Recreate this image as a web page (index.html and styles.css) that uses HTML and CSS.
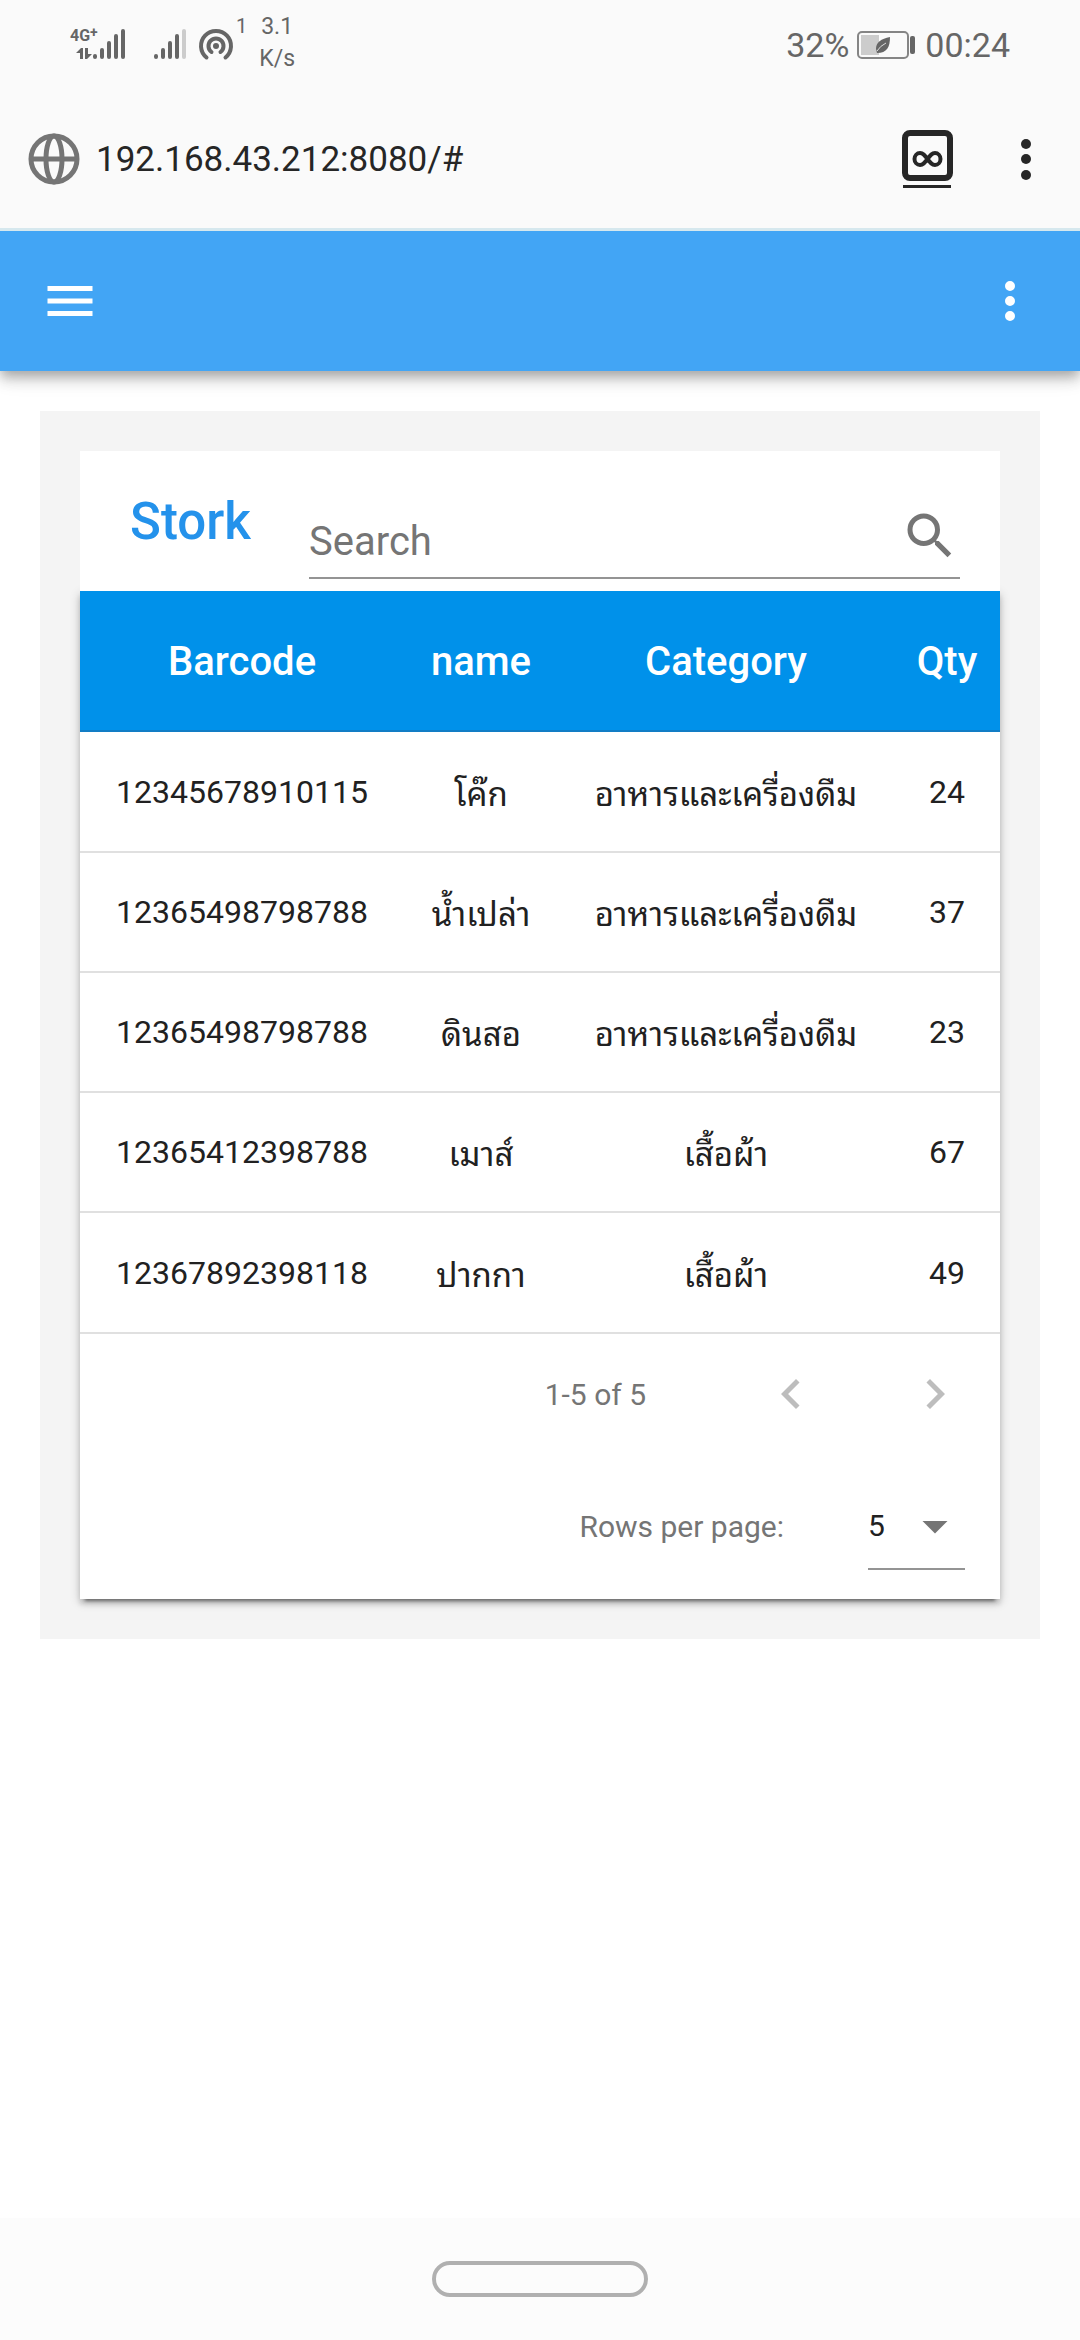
FILE: index.html
```html
<!DOCTYPE html>
<html lang="th">
<head>
<meta charset="utf-8">
<meta name="viewport" content="width=device-width, initial-scale=1">
<title>Stork</title>
<link rel="stylesheet" href="styles.css">
</head>
<body>
<div class="status">
  <div class="status-left">
    <div class="network">
      <span class="network-type">4G<sup>+</sup></span>
      <svg class="arrows" width="16" height="12" viewBox="0 0 16 12"><path d="M0 5L5 0h2v11H4V5zM9 0h3v6h4l-5 5H9z"/></svg>
    </div>
    <svg class="bars" width="34" height="32" viewBox="0 0 34 32"><path d="M3 28v1M10 22v7M17 15v14M24 8v21M31 3v26"/></svg>
    <svg class="bars bars-second" width="34" height="32" viewBox="0 0 34 32"><path d="M3 28v1M10 22v7M17 15v14M24 8v21"/><path class="faint" d="M31 3v26"/></svg>
    <svg class="hotspot" width="36" height="34" viewBox="0 0 36 34"><circle cx="18" cy="18" r="3"/><path d="M13.500 24A7.500 7.500 0 1 1 22.500 24M8.500 29.500A15 15 0 1 1 27.500 29.500"/></svg>
    <span class="clients">1</span>
    <span class="speed">3.1<br>K/s</span>
  </div>
  <div class="status-right">
    <span>32%</span>
    <svg width="60" height="28" viewBox="0 0 60 28"><rect x="1" y="1" width="50" height="26" rx="4" fill="none" stroke="#858585" stroke-width="2"/><path fill="#ccc" d="M4 4h18v20H4z"/><rect x="53" y="5" width="5" height="18" rx="2" fill="#666"/><path fill="#666" d="M33 6c-9 2-14 5-14 12l1 4c10 0 13-6 13-16z"/><path d="M20 20q3-5 9-8" stroke="#ddd" fill="none"/></svg>
    <span>00:24</span>
  </div>
</div>
<div class="browser">
  <svg width="52" height="52" viewBox="0 0 52 52" fill="none" stroke="#757575" stroke-width="5"><circle cx="26" cy="26" r="23"/><path d="M3 26h46"/><ellipse cx="26" cy="26" rx="8" ry="23"/></svg>
  <a class="url" href="#">192.168.43.212:8080/#</a>
  <button class="plain tabs" aria-label="Tabs"><svg width="52" height="60" viewBox="0 0 52 60" fill="none" stroke="#262626"><rect x="4" y="4" width="45" height="45" rx="5" stroke-width="6"/><path d="M2 57.500h48" stroke-width="3"/><path stroke-width="4" d="M26.500 30c-3-4-4.500-6-7.500-6a5.500 6 0 0 0 0 12c3 0 4.500-2 7.500-6s4.500-6 7.500-6a5.500 6 0 0 1 0 12c-3 0-4.500-2-7.500-6z"/></svg></button>
  <button class="plain" aria-label="Browser menu"><svg width="60" height="60" viewBox="0 0 60 60" fill="#262626"><circle cx="30" cy="15" r="5"/><circle cx="30" cy="30" r="5"/><circle cx="30" cy="46" r="5"/></svg></button>
</div>
<header class="appbar">
  <button class="plain" aria-label="Open menu"><svg width="60" height="60" viewBox="0 0 24 24" fill="#fff"><path d="M3 18h18v-2H3v2zm0-5h18v-2H3v2zm0-7v2h18V6H3z"/></svg></button>
  <button class="plain" aria-label="More"><svg width="60" height="60" viewBox="0 0 24 24" fill="#fff"><path d="M12 8a2 2 0 1 0 0-4 2 2 0 0 0 0 4zm0 2a2 2 0 1 0 0 4 2 2 0 0 0 0-4zm0 6a2 2 0 1 0 0 4 2 2 0 0 0 0-4z"/></svg></button>
</header>
<main class="panel">
  <div class="search-row">
    <h1 class="title">Stork</h1>
    <div class="field">
      <input class="search" type="search" placeholder="Search" aria-label="Search">
      <svg class="search-icon" width="60" height="60" viewBox="0 0 24 24" fill="#757575"><path d="M15.500 14h-.79l-.28-.27A6.471 6.471 0 0 0 16 9.500 6.500 6.500 0 1 0 9.500 16c1.610 0 3.090-.59 4.230-1.570l.27.28v.79l5 4.990L20.490 19l-4.990-5zm-6 0C7.010 14 5 11.990 5 9.500S7.010 5 9.500 5 14 7.010 14 9.500 11.990 14 9.500 14z"/></svg>
    </div>
  </div>
  <section class="card">
    <table class="stock">
      <colgroup><col class="col-barcode"><col class="col-name"><col class="col-category"><col class="col-qty"></colgroup>
      <thead><tr><th>Barcode</th><th>name</th><th>Category</th><th>Qty</th></tr></thead>
      <tbody>
        <tr><td>12345678910115</td><td class="thai">โค๊ก</td><td class="thai">อาหารและเครื่องดืม</td><td>24</td></tr>
        <tr><td>12365498798788</td><td class="thai">น้ำเปล่า</td><td class="thai">อาหารและเครื่องดืม</td><td>37</td></tr>
        <tr><td>12365498798788</td><td class="thai">ดินสอ</td><td class="thai">อาหารและเครื่องดืม</td><td>23</td></tr>
        <tr><td>12365412398788</td><td class="thai">เมาส์</td><td class="thai">เสื้อผ้า</td><td>67</td></tr>
        <tr><td>12367892398118</td><td class="thai">ปากกา</td><td class="thai">เสื้อผ้า</td><td>49</td></tr>
      </tbody>
    </table>
    <div class="pager">
      <span class="range">1-5 of 5</span>
      <button class="plain page" aria-label="Previous page" disabled><svg width="60" height="60" viewBox="0 0 24 24"><path d="M15.410 7.410L14 6l-6 6 6 6 1.410-1.410L10.830 12z"/></svg></button>
      <button class="plain page" aria-label="Next page" disabled><svg width="60" height="60" viewBox="0 0 24 24"><path d="M10 6L8.590 7.410 13.170 12l-4.580 4.590L10 18l6-6z"/></svg></button>
    </div>
    <div class="per-page">
      <label for="rows">Rows per page:</label>
      <div class="select-box">
        <select class="rows" id="rows"><option>5</option><option>10</option><option>20</option></select>
        <svg class="caret" width="60" height="60" viewBox="0 0 24 24" fill="#757575"><path d="M7 10l5 5 5-5z"/></svg>
      </div>
    </div>
  </section>
</main>
<footer class="navbar"><button class="home" aria-label="Home"></button></footer>
</body>
</html>
```
FILE: styles.css
```css
* { box-sizing: border-box; }

body {
  margin: 0;
  min-height: 100vh;
  display: flex;
  flex-direction: column;
  background: #fff;
  color: #212121;
  font-family: Roboto, "Noto Sans", sans-serif;
}

svg { display: block; flex: none; }

.plain {
  border: 0;
  padding: 0;
  background: none;
}

/* Phone status bar */
.status {
  display: flex;
  justify-content: space-between;
  height: 90px;
  padding: 0 70px;
  background: #fafafa;
  color: #666;
}
.status-left { display: flex; align-items: flex-start; }
.network {
  width: 24px;
  padding-top: 26px;
  font-size: 16px;
  font-weight: 700;
  line-height: 20px;
}
.network-type { display: block; white-space: nowrap; }
.network sup { font-size: 14px; line-height: 0; vertical-align: 4px; }
.arrows { margin: 2px 0 0 6px; fill: #666; }
.bars {
  margin-top: 28px;
  fill: none;
  stroke: #666;
  stroke-width: 4;
  stroke-linecap: round;
}
.network + .bars { margin-left: -2px; }
.bars-second { margin-left: 27px; }
.faint { stroke: #ccc; }
.hotspot { margin: 28px 0 0 11px; fill: #666; }
.hotspot path { fill: none; stroke: #666; stroke-width: 4; stroke-linecap: round; }
.clients { margin: 14px 0 0 2px; font-size: 20px; line-height: 24px; }
.speed { margin: 11px 0 0 12px; font-size: 23px; line-height: 32px; text-align: center; }
.status-right {
  display: flex;
  align-items: center;
  gap: 8px;
  font-size: 34px;
}

/* Browser address bar */
.browser {
  display: flex;
  align-items: center;
  height: 141px;
  padding: 0 24px 0 28px;
  background: #fafafa;
  border-bottom: 3px solid #d6e8ee;
}
.url {
  flex: 1;
  padding-left: 16px;
  color: #262626;
  font-size: 35px;
  text-decoration: none;
}
.tabs { margin-right: 43px; }

/* Application bar */
.appbar {
  position: relative;
  display: flex;
  align-items: center;
  justify-content: space-between;
  height: 140px;
  padding: 0 40px;
  background: #42a5f5;
  box-shadow: 0 5px 10px -2px rgba(0, 0, 0, .2), 0 10px 12px rgba(0, 0, 0, .14), 0 2px 25px rgba(0, 0, 0, .12);
  clip-path: inset(0 0 -40px 0);
}

.panel {
  margin: 40px;
  padding: 40px;
  background: #f4f4f4;
}
.search-row {
  position: relative;
  display: flex;
  align-items: center;
  height: 140px;
  padding: 0 40px 0 50px;
  background: #fff;
}
.title {
  width: 179px;
  margin: 0;
  color: #2492eb;
  font-size: 51px;
  font-weight: 500;
}
.field {
  flex: 1;
  align-self: flex-end;
  display: flex;
  align-items: center;
  height: 84px;
  margin-bottom: 12px;
  border-bottom: 2px solid #949494;
}
.search {
  flex: 1;
  min-width: 0;
  height: 82px;
  padding: 10px 0 0;
  border: 0;
  outline: 0;
  background: none;
  color: #212121;
  font: 40px Roboto, sans-serif;
  appearance: none;
}
.search::placeholder { color: #757575; opacity: 1; }

.card {
  background: #fff;
  box-shadow: 0 3px 10px rgba(0, 0, 0, .2), 0 5px 5px rgba(0, 0, 0, .14), 0 7px 3px -5px rgba(0, 0, 0, .4);
}
.stock {
  width: 100%;
  table-layout: fixed;
  border-collapse: separate;
  border-spacing: 0;
  text-align: center;
}
.col-barcode { width: 324px; }
.col-name { width: 154px; }
.col-category { width: 336px; }
.col-qty { width: 106px; }
.stock th {
  height: 141px;
  padding: 2px 0 0;
  border-bottom: 2px solid #127dc5;
  background: #0091ea;
  color: #fff;
  font-size: 40px;
  font-weight: 500;
}
.stock td {
  height: 120px;
  padding: 0;
  border-bottom: 2px solid #e0e0e0;
  font-size: 32px;
  line-height: 40px;
  white-space: nowrap;
}
.stock tr:first-child td, .stock tr:last-child td { height: 121px; }
.stock .thai {
  font-family: "Noto Sans Thai Looped", "Noto Looped Thai", Loma, Waree, "Noto Sans", sans-serif;
  font-size: 33px;
}

.pager, .per-page {
  display: flex;
  align-items: center;
  justify-content: flex-end;
  color: #757575;
  font-size: 30px;
}
.pager { height: 120px; gap: 14px; }
.range { padding-right: 66px; }
.page {
  display: flex;
  justify-content: center;
  width: 130px;
  fill: #bdbdbd;
}
.per-page { height: 145px; padding-right: 35px; gap: 84px; }
.select-box {
  position: relative;
  width: 97px;
  border-bottom: 2px solid #949494;
}
.rows {
  display: block;
  width: 100%;
  height: 84px;
  padding: 0;
  border: 0;
  background: none;
  color: #212121;
  font: 30px Roboto, sans-serif;
  appearance: none;
}
.caret {
  position: absolute;
  top: 12px;
  right: 0;
  pointer-events: none;
}

/* Phone navigation bar */
.navbar {
  display: flex;
  align-items: center;
  justify-content: center;
  height: 122px;
  margin-top: auto;
  background: #fcfcfc;
}
.home {
  width: 216px;
  height: 36px;
  border: 4px solid #b0b0b0;
  border-radius: 18px;
  background: none;
}
```
